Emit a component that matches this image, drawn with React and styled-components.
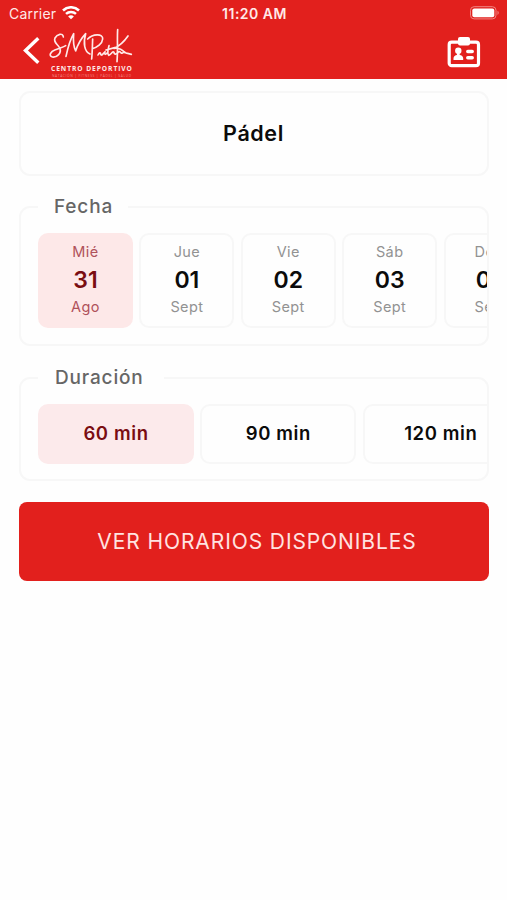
import React from "react";
import styled, { createGlobalStyle } from "styled-components";

const days = [
  { name: "Mié", number: "31", month: "Ago" },
  { name: "Jue", number: "01", month: "Sept" },
  { name: "Vie", number: "02", month: "Sept" },
  { name: "Sáb", number: "03", month: "Sept" },
  { name: "Dom", number: "04", month: "Sept" },
];

const durations = ["60 min", "90 min", "120 min"];

const WifiIcon = () => (
  <svg width="18" height="14" viewBox="0 0 18 14" fill="none" stroke="#fff">
    <path d="M1 4.500C5.500.2 12.500.2 17 4.500" strokeWidth="2.600" />
    <path d="M4 7.900C6.800 5.300 11.200 5.300 14 7.900" strokeWidth="2.500" />
    <path d="M9 13.300L6.100 10.400C7.800 9 10.200 9 11.900 10.400Z" fill="#fff" stroke="none" />
  </svg>
);

const BatteryIcon = () => (
  <svg width="30" height="14" viewBox="0 0 30 14" fill="none">
    <rect x="0.5" y="0.7" width="25.500" height="12.200" rx="3.600" stroke="#f08583" />
    <rect x="2.300" y="2.400" width="22" height="8.800" rx="2" fill="#fff" />
    <path d="M27.500 4.700C29.200 5.400 29.200 8.200 27.500 8.900Z" fill="#f08583" />
  </svg>
);

const BackIcon = () => (
  <svg width="17" height="28" viewBox="0 0 17 28" fill="none">
    <path d="M15.300 1.300L2.500 13.500L15.300 25.700" stroke="#fff" strokeWidth="3.400" />
  </svg>
);

const Logo = () => (
  <svg width="100" height="58" viewBox="0 0 300 174" fill="none">
    <g stroke="#ffe9e8" strokeWidth="5" strokeLinecap="round" strokeLinejoin="round">
      <path d="M70 45C69 31 51 37 45 48C39 61 53 66 59 78C66 93 51 107 37 105C25 102 31 88 46 83C58 79 69 76 77 71" />
      <path d="M78 103C83 80 89 55 101 35C99 59 101 75 107 87C113 68 123 50 137 35C129 62 133 89 150 96" />
      <path d="M158 51C157 72 157 92 155 111M143 51C158 35 190 34 188 51C187 65 171 77 157 80" />
      <path d="M174 99C178 91 182 91 182 97C185 103 190 95 195 89C192 99 198 100 204 89M207 71C203 85 202 95 206 100C214 98 217 86 222 91C222 99 230 98 235 90C239 84 244 98 249 92C253 87 258 95 263 94L274 97M198 84L224 77" />
      <path d="M233 23C231 50 234 84 231 119M264 42C253 58 240 71 222 79C239 77 247 83 254 91" />
    </g>
    <LogoName x="33" y="147">CENTRO DEPORTIVO</LogoName>
    <LogoTagline x="36" y="164">NATACIÓN | FITNESS | PÁDEL | SALUD</LogoTagline>
  </svg>
);

const CardIcon = () => (
  <svg width="34" height="32" viewBox="0 0 34 32" fill="none">
    <rect x="2.200" y="6.200" width="29.300" height="23.500" rx="2.500" stroke="#fff" strokeWidth="3.200" />
    <rect x="11" y="1" width="12" height="8.500" rx="2" fill="#fff" />
    <circle cx="11.300" cy="14.700" r="3.200" fill="#fff" />
    <path d="M6.500 24V22.300C6.500 20.300 8.300 19.400 9.900 19.100L10 17H12.600L12.700 19.100C14.500 19.400 16.200 20.300 16.200 22.300V24Z" fill="#fff" />
    <path d="M20.800 15.500H25.200M20.800 21.700H25.200" stroke="#fff" strokeWidth="3.500" strokeLinecap="round" />
  </svg>
);

const App = () => {
  return (
    <Screen>
      <GlobalStyle />
      <Header>
        <StatusBar>
          <Carrier>
            Carrier <WifiIcon />
          </Carrier>
          <Clock>11:20 AM</Clock>
          <Battery>
            <BatteryIcon />
          </Battery>
        </StatusBar>
        <NavBar>
          <BackIcon />
          <Logo />
          <CardButton aria-label="Carnet">
            <CardIcon />
          </CardButton>
        </NavBar>
      </Header>
      <Content>
        <Activity>Pádel</Activity>
        <Group>
          <Legend>Fecha</Legend>
          <Scroller>
            {days.map((day, index) => (
              <Day key={day.number} $active={index === 0}>
                <small>{day.name}</small>
                <strong>{day.number}</strong>
                <small>{day.month}</small>
              </Day>
            ))}
          </Scroller>
        </Group>
        <Group $short>
          <Legend $short>Duración</Legend>
          <Scroller>
            {durations.map((duration, index) => (
              <Duration key={duration} $active={index === 0}>
                {duration}
              </Duration>
            ))}
          </Scroller>
        </Group>
        <Submit>VER HORARIOS DISPONIBLES</Submit>
      </Content>
    </Screen>
  );
};

const GlobalStyle = createGlobalStyle`
  * {
    box-sizing: border-box;
  }

  body {
    margin: 0;
    background: #fefefe;
    font-family: Inter, "Liberation Sans", sans-serif;
  }

  svg {
    display: block;
    flex-shrink: 0;
  }
`;

const Screen = styled.div`
  width: 507px;
  height: 900px;
  overflow: hidden;
`;

const Header = styled.header`
  height: 79px;
  background: #e2201d;
  color: #fff;
`;

const StatusBar = styled.div`
  display: grid;
  grid-template-columns: 1fr auto 1fr;
  align-items: center;
  height: 22px;
  padding: 4px 7px 0 9px;
`;

const Carrier = styled.div`
  display: flex;
  align-items: center;
  gap: 6px;
  font-size: 14px;
  line-height: 17px;
  letter-spacing: 0.2px;
  color: #ffe9e8;
`;

const Clock = styled.div`
  font-size: 14px;
  font-weight: 600;
  line-height: 17px;
  letter-spacing: 0.5px;
  color: #ffe9e8;
`;

const Battery = styled.div`
  display: flex;
  justify-content: flex-end;
`;

const NavBar = styled.nav`
  display: flex;
  align-items: center;
  height: 57px;
  padding: 0 26px 0 23px;
`;

const LogoName = styled.text`
  fill: #ffe9e8;
  font-family: "Open Sans", sans-serif;
  font-size: 20px;
  font-weight: 700;
  letter-spacing: 2.8px;
`;

const LogoTagline = styled.text`
  fill: #f28b88;
  font-family: "Open Sans", sans-serif;
  font-size: 10px;
  letter-spacing: 1.7px;
`;

const CardButton = styled.button`
  margin: 2px 0 0 auto;
  padding: 0;
  border: 0;
  background: none;
`;

const Content = styled.main`
  padding: 12px 18px 0 19px;
`;

const Activity = styled.h1`
  display: flex;
  align-items: center;
  justify-content: center;
  height: 85px;
  margin: 0 0 19px;
  padding: 0 1px 1px 0;
  border: 2px solid #f7f7f7;
  border-radius: 11px;
  font-size: 21.5px;
  font-weight: 600;
  letter-spacing: 0.6px;
  color: #0b0b0b;
`;

const Group = styled.fieldset`
  min-width: 0;
  height: ${({ $short }) => ($short ? "115px" : "151px")};
  margin: 0 0 ${({ $short }) => ($short ? "21px" : "20px")};
  padding: 14px 0 0 17px;
  border: 2px solid #f7f7f7;
  border-radius: 11px;
`;

const Legend = styled.legend`
  height: 24px;
  padding: 0 ${({ $short }) => ($short ? "20px 0 17px" : "15px 0 16px")};
  font-size: 19px;
  font-weight: 500;
  line-height: 23px;
  letter-spacing: 0.85px;
  color: #666;
`;

const Scroller = styled.div`
  display: flex;
  gap: 6.4px;
  overflow: hidden;
`;

const Option = styled.button`
  flex-shrink: 0;
  padding: 0;
  border: 2px solid ${({ $active }) => ($active ? "transparent" : "#f7f7f7")};
  border-radius: 10px;
  background: ${({ $active }) => ($active ? "#fde8e8" : "#fefefe")} border-box;
  color: ${({ $active }) => ($active ? "#7a0d12" : "#0b0b0b")};
  font-family: inherit;
`;

const Day = styled(Option)`
  display: flex;
  flex-direction: column;
  align-items: center;
  width: 95px;
  height: 95px;
  padding-top: 7px;

  small {
    font-size: 14.5px;
    line-height: 20px;
    letter-spacing: 0.4px;
    color: ${({ $active }) => ($active ? "#b0525b" : "#929292")};
  }

  strong {
    padding-top: 2px;
    font-size: 23px;
    font-weight: 600;
    line-height: 33px;
  }
`;

const Duration = styled(Option)`
  width: 156px;
  height: 60px;
  padding: 0 0 2px;
  background-color: ${({ $active }) => ($active ? "#fceaeb" : "#fefefe")};
  font-size: 18.5px;
  font-weight: 600;
  letter-spacing: 0.6px;
`;

const Submit = styled.button`
  display: block;
  width: 100%;
  height: 79px;
  padding: 0 0 1px 6px;
  border: 0;
  border-radius: 8px;
  background: #e2201d;
  color: #ffe3e1;
  font-family: inherit;
  font-size: 21px;
  letter-spacing: 0.9px;
`;

export default App;
